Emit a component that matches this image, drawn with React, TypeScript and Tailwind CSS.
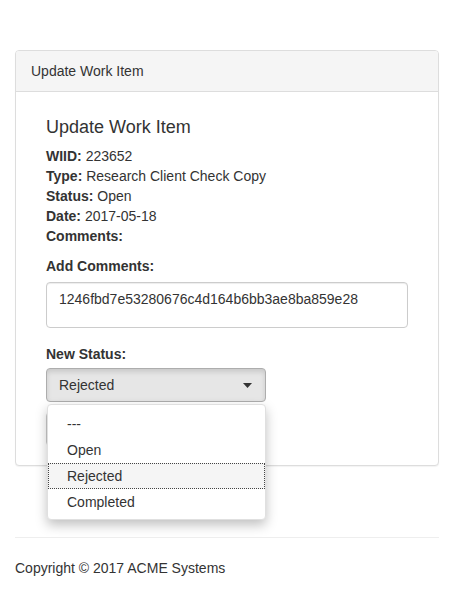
const statuses = ["---", "Open", "Rejected", "Completed"];

const details = [
  { label: "WIID:", value: "223652" },
  { label: "Type:", value: "Research Client Check Copy" },
  { label: "Status:", value: "Open" },
  { label: "Date:", value: "2017-05-18" },
  { label: "Comments:", value: "" }
];

const App = () => {
  return (
    <div className="min-h-[604px] bg-white px-[15px] pt-[50px] text-[14px] leading-[20px] text-[#333] font-['Liberation_Sans',Arial,sans-serif]">
      <div className="rounded-[4px] border border-[#ddd] bg-white shadow-[0_1px_1px_rgba(0,0,0,0.05)]">
        <div className="rounded-t-[3px] border-b border-[#ddd] bg-[#f5f5f5] px-[15px] py-[10px]">
          Update Work Item
        </div>
        <div className="px-[30px] pt-[25px] pb-[19px]">
          <h3 className="mb-[9px] text-[18px] leading-[20px]">Update Work Item</h3>
          {details.map((d) => (
            <div key={d.label}>
              <span className="font-bold">{d.label}</span> {d.value}
            </div>
          ))}

          <div className="mt-[10px] font-bold">Add Comments:</div>
          <div className="mt-[6px] h-[46px] w-[362px] rounded-[4px] border border-[#ccc] px-[12px] pt-[6px] shadow-[inset_0_1px_1px_rgba(0,0,0,0.075)]">
            1246fbd7e53280676c4d164b6bb3ae8ba859e28
          </div>

          <div className="mt-[16px] font-bold">New Status:</div>
          <div className="relative mt-[4px] w-[220px]">
            <div className="flex h-[34px] items-center justify-between rounded-[4px] border border-[#adadad] bg-[#e6e6e6] pl-[12px] pr-[13px] shadow-[inset_0_3px_5px_rgba(0,0,0,0.125)]">
              <span>Rejected</span>
              <svg width="9" height="5" viewBox="0 0 9 5">
                <path d="M0 0h9L4.5 5z" fill="#333" />
              </svg>
            </div>
            {/* submit button, covered by the open list */}
            <button aria-label="Update" className="mt-[10px] block h-[34px] w-[80px] rounded-[4px] border border-[#ccc] bg-white" />
            <ul className="absolute left-[1px] top-[36px] w-[219px] rounded-[4px] border border-[#e0e0e0] bg-white pt-[6px] pb-[4px] shadow-[0_5px_12px_rgba(0,0,0,0.25)]">
              {statuses.map((s) => (
                <li
                  key={s}
                  className={
                    s === "Rejected"
                      ? "h-[26px] border border-dotted border-[#444] bg-[#f5f5f5] pl-[18px] leading-[24px]"
                      : "h-[26px] pl-[19px] leading-[26px]"
                  }
                >
                  {s}
                </li>
              ))}
            </ul>
          </div>
        </div>
      </div>

      <div className="mt-[71px] border-t border-[#eee] pt-[20px]">
        Copyright © 2017 ACME Systems
      </div>
    </div>
  );
};

export default App;
